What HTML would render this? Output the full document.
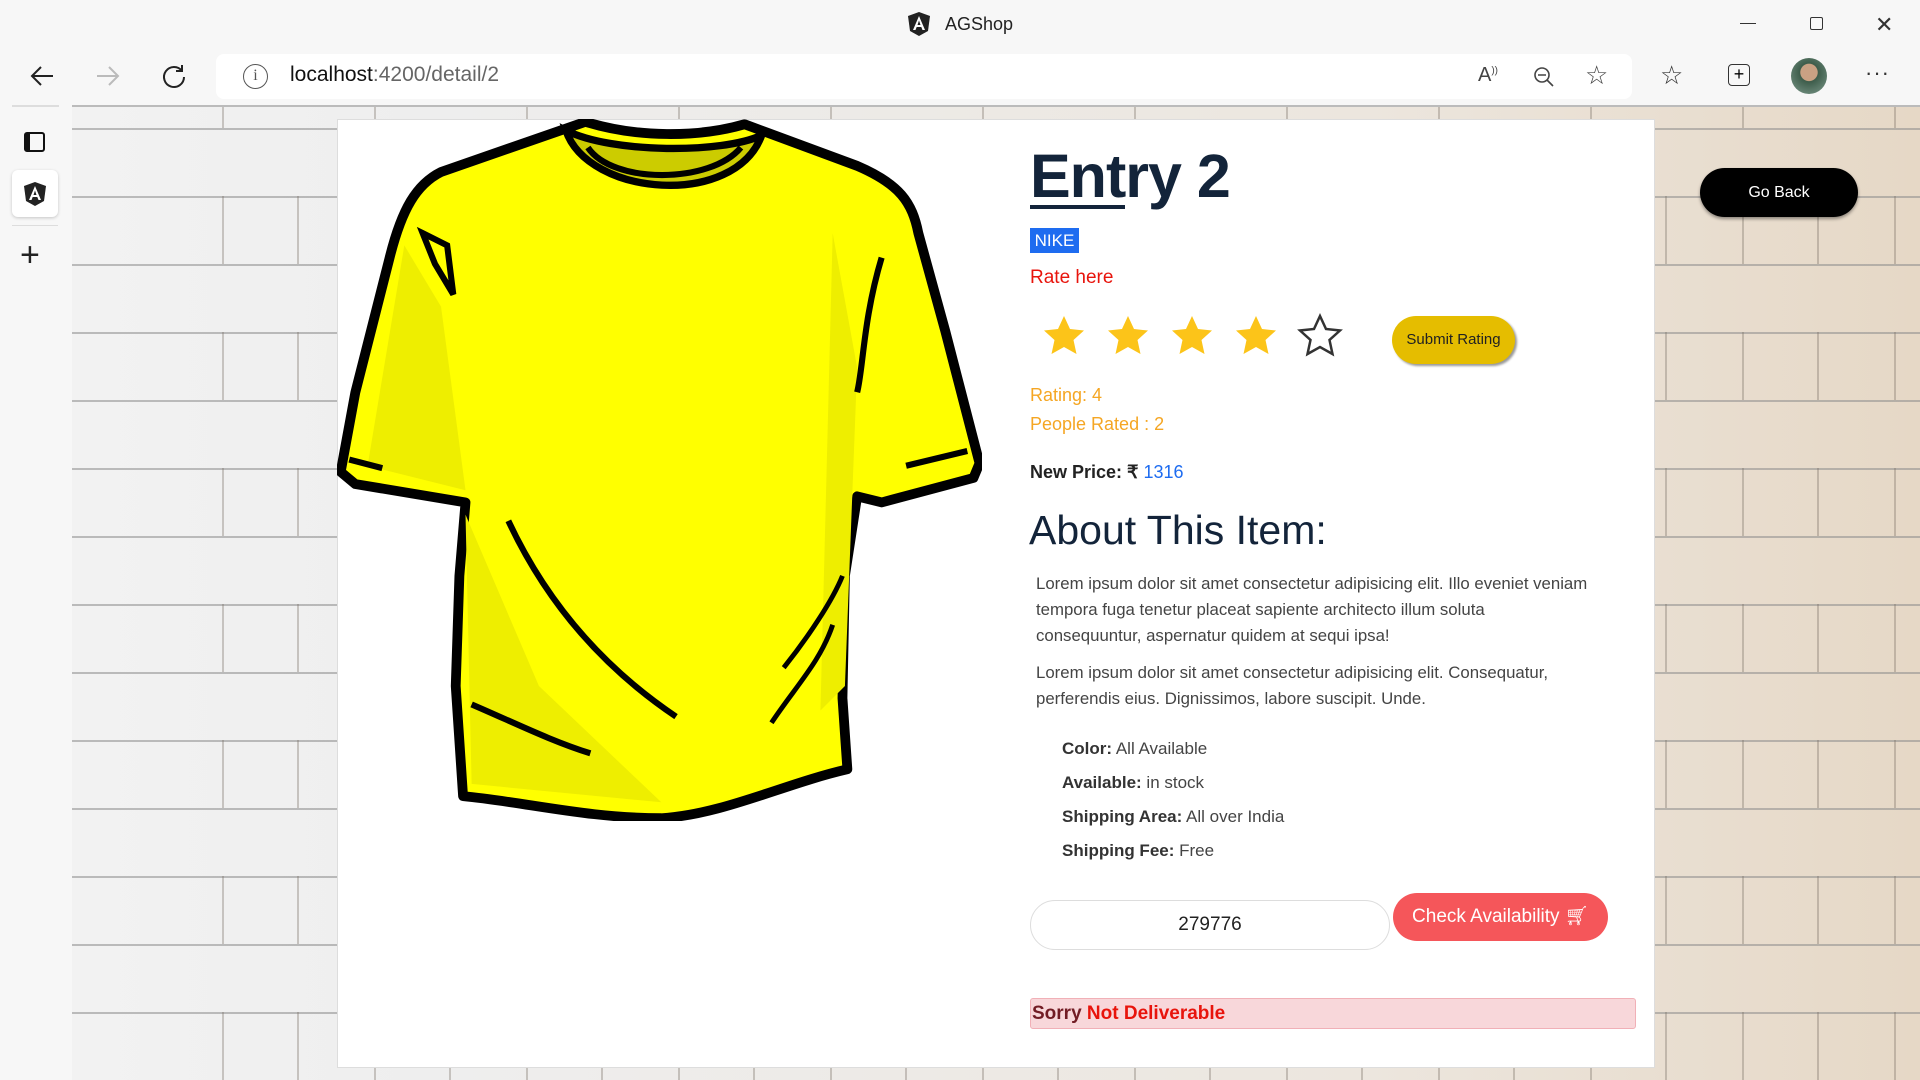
<!DOCTYPE html>
<html><head><meta charset="utf-8"><style>
*{margin:0;padding:0;box-sizing:border-box}
body{width:1920px;height:1080px;overflow:hidden;background:#f7f7f7;font-family:"Liberation Sans",sans-serif;position:relative}
.a{position:absolute}
.bg{left:72px;top:106px;width:1848px;height:974px;
background:
repeating-linear-gradient(0deg,transparent 0 66px,rgba(140,140,140,.55) 66px 68px),
linear-gradient(90deg,#f2f2f2 0,#eeeeee 20%,#ece6de 70%,#e6d8c6 100%);}
.bricks{left:72px;top:106px;width:1848px;height:974px;
background:repeating-linear-gradient(90deg,transparent 0 150px,rgba(120,110,100,.35) 150px 152px);
-webkit-mask:repeating-linear-gradient(0deg,#000 0 68px,transparent 68px 136px);}
.bricks2{left:147px;top:174px;width:1773px;height:906px;
background:repeating-linear-gradient(90deg,transparent 0 150px,rgba(120,110,100,.35) 150px 152px);
-webkit-mask:repeating-linear-gradient(0deg,#000 0 68px,transparent 68px 136px);}
.card{left:337px;top:119px;width:1318px;height:949px;background:#fff;border:1px solid #ddd}
.t{color:#444}
</style></head><body>
<div class="a" style="left:908px;top:12px;width:22px;height:24px">
<svg width="22" height="24" viewBox="0 0 22 24"><path d="M11 0L22 4 20 19 11 24 2 19 0 4Z" fill="#222"/><path d="M11 4L5 18h2.5l1.2-3h4.6l1.2 3H17L11 4zm-1.5 9L11 8.5 12.5 13z" fill="#fff"/></svg></div>
<div class="a" style="left:945px;top:14px;font-size:18px;color:#222">AGShop</div>
<div class="a" style="left:1740px;top:23px;width:16px;height:1px;background:#333"></div>
<div class="a" style="left:1810px;top:17px;width:13px;height:13px;border:1.5px solid #333;border-radius:2px"></div>
<div class="a" style="left:1875px;top:12px;font-size:22px;color:#333">✕</div>
<svg class="a" style="left:28px;top:62px" width="28" height="28" viewBox="0 0 28 28"><path d="M25 14H4M13 5l-9 9 9 9" stroke="#222" stroke-width="2" fill="none"/></svg>
<svg class="a" style="left:94px;top:62px" width="28" height="28" viewBox="0 0 28 28"><path d="M3 14h21M15 5l9 9-9 9" stroke="#bbb" stroke-width="2" fill="none"/></svg>
<svg class="a" style="left:160px;top:62px" width="28" height="28" viewBox="0 0 28 28"><path d="M22 9A10 10 0 1 0 24 15M22 3v6h-6" stroke="#222" stroke-width="2" fill="none"/></svg>
<div class="a" style="left:216px;top:54px;width:1416px;height:45px;background:#fff;border-radius:8px"></div>
<div class="a" style="left:243px;top:64px;width:25px;height:25px;border:1.5px solid #555;border-radius:50%;text-align:center;font-size:16px;line-height:22px;color:#555;font-family:'Liberation Serif',serif">i</div>
<div class="a" style="left:290px;top:63px;font-size:21px;color:#111">localhost<span style="color:#666">:4200/detail/2</span></div>
<div class="a" style="left:1478px;top:64px;font-size:20px;color:#444">A<sup style="font-size:10px">))</sup></div>
<svg class="a" style="left:1532px;top:65px" width="24" height="24"><circle cx="10" cy="10" r="7" stroke="#444" stroke-width="1.6" fill="none"/><path d="M15 15l6 6M6 10h8" stroke="#444" stroke-width="1.6"/></svg>
<div class="a" style="left:1585px;top:60px;font-size:26px;color:#444">☆</div>
<div class="a" style="left:1660px;top:60px;font-size:26px;color:#333">☆</div>
<div class="a" style="left:1728px;top:64px;width:22px;height:22px;border:1.6px solid #333;border-radius:4px;font-size:18px;line-height:18px;text-align:center">+</div>
<div class="a" style="left:1791px;top:58px;width:36px;height:36px;border-radius:50%;background:radial-gradient(circle at 50% 40%,#c9a183 0 30%,#3d5c4a 32%,#7d9a8c 100%)"></div>
<div class="a" style="left:1865px;top:60px;font-size:22px;color:#333;letter-spacing:1px">···</div>
<div class="a" style="left:12px;top:105px;width:47px;height:2px;background:#ddd"></div>
<div class="a" style="left:24px;top:132px;width:21px;height:20px;border:2px solid #111;border-left-width:6px;border-radius:3px"></div>
<div class="a" style="left:12px;top:170px;width:46px;height:47px;background:#fff;border-radius:6px;box-shadow:0 1px 3px rgba(0,0,0,.2)"></div>
<svg class="a" style="left:24px;top:182px" width="22" height="24" viewBox="0 0 22 24"><path d="M11 0L22 4 20 19 11 24 2 19 0 4Z" fill="#222"/><path d="M11 4L5 18h2.5l1.2-3h4.6l1.2 3H17L11 4zm-1.5 9L11 8.5 12.5 13z" fill="#fff"/></svg>
<div class="a" style="left:12px;top:225px;width:46px;height:1px;background:#ddd"></div>
<div class="a" style="left:20px;top:236px;font-size:34px;color:#222;font-weight:300">+</div>
<div class="a bg"></div><div class="a bricks"></div><div class="a bricks2"></div>
<div class="a" style="left:72px;top:105px;width:1848px;height:2px;background:#bbb"></div>
<div class="a" style="left:1700px;top:168px;width:158px;height:49px;background:#000;border-radius:25px;color:#fff;font-size:16px;text-align:center;line-height:49px;box-shadow:0 2px 3px rgba(0,0,0,.4)">Go Back</div>
<div class="a card"></div>
<svg class="a" style="left:337px;top:119px" width="645" height="702" viewBox="275 97 527 573">
<path d="M478,99 C520,112 570,112 608,101 L700,135 C735,150 745,165 750,190 L772,270 L800,378 L795,390 L720,410 L700,405 L690,470 L688,570 L692,628 C640,640 590,665 540,668 C480,668 430,655 378,650 L372,560 L375,470 L380,410 L290,395 L278,385 L290,320 L318,210 C328,170 340,150 360,140 Z" fill="#ffff00" stroke="#000" stroke-width="8" stroke-linejoin="round"/>
<path d="M330,200 L300,380 L380,400 L360,250Z" fill="#eeee00"/>
<path d="M380,420 L385,640 L540,655 L440,560Z" fill="#eeee00"/>
<path d="M680,190 L700,300 L690,560 L670,580Z" fill="#eeee00"/>
<path d="M462,106 C480,160 600,170 622,110 C590,125 500,125 462,106Z" fill="#cccc00" stroke="#000" stroke-width="6"/>
<path d="M480,120 C500,150 580,150 605,120" fill="none" stroke="#000" stroke-width="5"/>
<path d="M415,425 C450,500 500,550 552,585" fill="none" stroke="#000" stroke-width="5"/>
<path d="M385,575 C420,590 450,605 482,615" fill="none" stroke="#000" stroke-width="5"/>
<path d="M640,545 C660,520 680,490 688,470" fill="none" stroke="#000" stroke-width="4"/>
<path d="M630,590 C650,560 670,540 680,510" fill="none" stroke="#000" stroke-width="4"/>
<path d="M720,210 C705,260 705,300 700,320" fill="none" stroke="#000" stroke-width="5"/>
<path d="M345,190 L365,200 L370,240 L355,215Z" fill="none" stroke="#000" stroke-width="5"/>
<path d="M285,375 L312,382 M740,380 L790,368" stroke="#000" stroke-width="5"/>
</svg>
<div class="a" style="left:1030px;top:141px;font-size:61px;font-weight:bold;color:#13243a;letter-spacing:-1px">Entry 2</div>
<div class="a" style="left:1030px;top:205px;width:95px;height:4px;background:#13243a"></div>
<div class="a" style="left:1030px;top:228px;width:49px;height:25px;background:#1e6cf0;color:#fff;font-size:17px;text-align:center;line-height:25px">NIKE</div>
<div class="a" style="left:1030px;top:267px;font-size:19px;color:#e8140c">Rate here</div>
<svg class="a" style="left:1040px;top:312px" width="310" height="50" viewBox="0 0 310 50">
<defs><path id="s" d="M22 2l6 13 14 1.5-10.5 9.5 3 14L22 33l-12.5 7 3-14L2 16.5 16 15z"/></defs>
<use href="#s" x="2" y="2" fill="#fcc419"/><use href="#s" x="66" y="2" fill="#fcc419"/><use href="#s" x="130" y="2" fill="#fcc419"/><use href="#s" x="194" y="2" fill="#fcc419"/><use href="#s" x="258" y="2" fill="none" stroke="#333" stroke-width="2.5"/>
</svg>
<div class="a" style="left:1392px;top:316px;width:123px;height:48px;background:#e5bd00;border-radius:24px;font-size:15px;color:#222;text-align:center;line-height:48px;box-shadow:2px 2px 2px #999">Submit Rating</div>
<div class="a" style="left:1030px;top:385px;font-size:18px;color:#f5a623">Rating: 4</div>
<div class="a" style="left:1030px;top:414px;font-size:18px;color:#f5a623">People Rated : 2</div>
<div class="a" style="left:1030px;top:462px;font-size:18px;color:#222"><b>New Price: ₹</b> <span style="color:#1e6cf0">1316</span></div>
<div class="a" style="left:1029px;top:507px;font-size:41px;color:#13243a">About This Item:</div>
<div class="a t" style="left:1036px;top:571px;width:555px;font-size:16.8px;line-height:26px">Lorem ipsum dolor sit amet consectetur adipisicing elit. Illo eveniet veniam tempora fuga tenetur placeat sapiente architecto illum soluta consequuntur, aspernatur quidem at sequi ipsa!</div>
<div class="a t" style="left:1036px;top:660px;width:570px;font-size:16.8px;line-height:26px">Lorem ipsum dolor sit amet consectetur adipisicing elit. Consequatur, perferendis eius. Dignissimos, labore suscipit. Unde.</div>
<div class="a t" style="left:1062px;top:732px;font-size:17px;line-height:34px"><b style="color:#333">Color:</b> All Available<br><b style="color:#333">Available:</b> in stock<br><b style="color:#333">Shipping Area:</b> All over India<br><b style="color:#333">Shipping Fee:</b> Free</div>
<div class="a" style="left:1030px;top:900px;width:360px;height:50px;border:1px solid #ddd;border-radius:25px;font-size:19px;text-align:center;line-height:48px;color:#222">279776</div>
<div class="a" style="left:1393px;top:893px;width:215px;height:48px;background:#f5565a;border-radius:24px;color:#fff;font-size:19px;text-align:center;line-height:48px">Check Availability 🛒︎</div>
<div class="a" style="left:1030px;top:998px;width:606px;height:31px;background:#f8d7da;border:1px solid #f1b0b7;border-radius:3px;font-size:19px;font-weight:bold;line-height:29px;padding-left:1px"><span style="color:#721c24">Sorry</span> <span style="color:#e8140c">Not Deliverable</span></div>
</body></html>
